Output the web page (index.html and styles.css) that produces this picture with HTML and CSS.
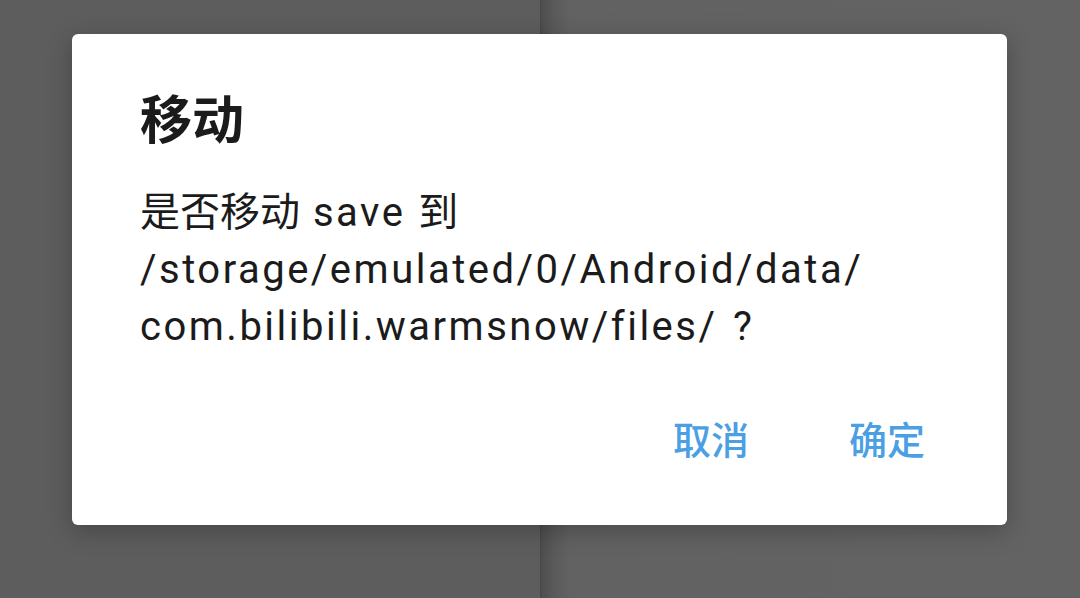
FILE: index.html
```html
<!DOCTYPE html>
<html lang="zh-CN">
<head>
  <meta charset="UTF-8" />
  <title>移动</title>
  <link rel="stylesheet" href="styles.css">
</head>
<body>
  <div class="screen">
    <div class="pane pane-left"></div>
    <div class="pane pane-right"></div>

    <!-- move confirm dialog -->
    <div class="dialog">
      <h2 class="dialog-title">移动</h2>
      <p class="dialog-msg">是否移动 <span class="latin">save</span> 到<br><span class="latin">/storage/emulated/0/Android/data/</span><br><span class="latin">com.bilibili.warmsnow/files/ ?</span></p>
      <div class="dialog-actions">
        <button type="button" class="btn">取消</button>
        <button type="button" class="btn">确定</button>
      </div>
    </div>
  </div>
</body>
</html>
```

FILE: styles.css
```css
html, body {
  margin: 0;
  padding: 0;
}
body {
  width: 1080px;
  height: 598px;
  overflow: hidden;
  font-family: Roboto, "Noto Sans CJK SC", sans-serif;
}
.screen {
  position: relative;
  width: 1080px;
  height: 598px;
  display: flex;
}
.pane {
  height: 100%;
}
.pane-left {
  width: 540px;
  background: #5d5d5d;
}
.pane-right {
  flex: 1;
  background: linear-gradient(to right, #464646 0px, #4f4f4f 2px, #5a5a5a 14px, #626262 30px, #636363 100%);
}
.dialog {
  position: absolute;
  left: 72px;
  top: 34px;
  width: 935px;
  height: 491px;
  box-sizing: border-box;
  background: #fff;
  border-radius: 6px;
  box-shadow: 0 6px 24px rgba(0,0,0,0.25);
  padding: 62px 68px 0 68px;
  color: #1b1b1b;
}
.dialog-title {
  margin: 0;
  font-size: 52px;
  font-weight: bold;
  line-height: 52px;
}
.dialog-msg {
  margin: 36px 0 0 0;
  font-size: 40px;
  line-height: 57px;
  word-spacing: 3px;
}
.latin {
  letter-spacing: 2.5px;
}
.dialog-actions {
  display: flex;
  justify-content: flex-end;
  gap: 100px;
  margin-top: 66px;
  padding-right: 14px;
}
.btn {
  border: none;
  background: none;
  padding: 0;
  font-family: inherit;
  font-size: 38px;
  font-weight: 500;
  color: #4b9fe3;
  line-height: 40px;
}
```
